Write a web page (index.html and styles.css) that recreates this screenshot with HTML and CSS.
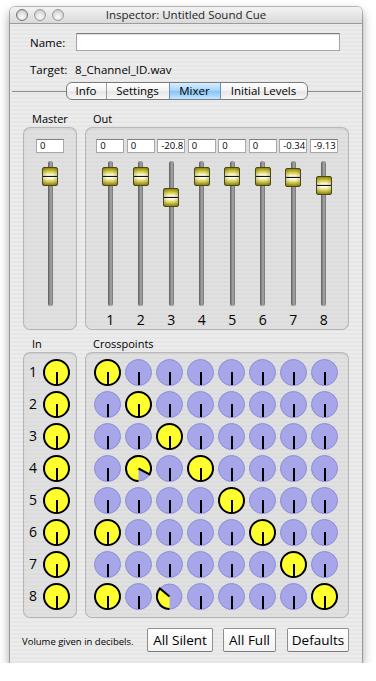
FILE: index.html
```html
<!DOCTYPE html>
<html>
<head>
<meta charset="utf-8">
<title>Inspector: Untitled Sound Cue</title>
<link rel="stylesheet" href="styles.css">
</head>
<body>
<div class="window">
  <div class="titlebar">
    <div class="lights"><span class="light first"></span><span class="light"></span><span class="light"></span></div>
    <div class="title">Inspector: Untitled Sound Cue</div>
    <div></div>
  </div>
  <div class="content">
    <div class="row name-row"><span class="lbl lbl-name">Name:</span><div class="textfield"></div></div>
    <div class="row target-row"><span class="lbl">Target:</span><span>8_Channel_ID.wav</span></div>

    <div class="tabview">
      <div class="tabs">
        <div class="tab t-info">Info</div>
        <div class="tab t-settings">Settings</div>
        <div class="tab t-mixer sel">Mixer</div>
        <div class="tab t-levels">Initial Levels</div>
      </div>

      <div class="section mixer">
        <div class="group left">
          <div class="glabel">Master</div>
          <div class="box mbox">
            <div class="chan">
              <div class="val">0</div>
              <div class="slider"><div class="track"></div><div class="thumb" style="top:6px"></div></div>
            </div>
          </div>
        </div>
        <div class="group right">
          <div class="glabel">Out</div>
          <div class="box obox">
            <div class="chan"><div class="val">0</div><div class="slider"><div class="track"></div><div class="thumb" style="top:6px"></div></div><div class="num">1</div></div>
            <div class="chan"><div class="val">0</div><div class="slider"><div class="track"></div><div class="thumb" style="top:6px"></div></div><div class="num">2</div></div>
            <div class="chan"><div class="val">-20.8</div><div class="slider"><div class="track"></div><div class="thumb" style="top:27px"></div></div><div class="num">3</div></div>
            <div class="chan"><div class="val">0</div><div class="slider"><div class="track"></div><div class="thumb" style="top:6px"></div></div><div class="num">4</div></div>
            <div class="chan"><div class="val">0</div><div class="slider"><div class="track"></div><div class="thumb" style="top:6px"></div></div><div class="num">5</div></div>
            <div class="chan"><div class="val">0</div><div class="slider"><div class="track"></div><div class="thumb" style="top:6px"></div></div><div class="num">6</div></div>
            <div class="chan"><div class="val">-0.34</div><div class="slider"><div class="track"></div><div class="thumb" style="top:7px"></div></div><div class="num">7</div></div>
            <div class="chan"><div class="val">-9.13</div><div class="slider"><div class="track"></div><div class="thumb" style="top:15px"></div></div><div class="num">8</div></div>
          </div>
        </div>
      </div>

      <div class="section cross">
        <div class="group left">
          <div class="glabel">In</div>
          <div class="box ibox">
            <span class="inum">1</span><i class="k y"></i>
            <span class="inum">2</span><i class="k y"></i>
            <span class="inum">3</span><i class="k y"></i>
            <span class="inum">4</span><i class="k y"></i>
            <span class="inum">5</span><i class="k y"></i>
            <span class="inum">6</span><i class="k y"></i>
            <span class="inum">7</span><i class="k y"></i>
            <span class="inum">8</span><i class="k y"></i>
          </div>
        </div>
        <div class="group right">
          <div class="glabel">Crosspoints</div>
          <div class="box xbox">
            <i class="k y"></i><i class="k"></i><i class="k"></i><i class="k"></i><i class="k"></i><i class="k"></i><i class="k"></i><i class="k"></i>
            <i class="k"></i><i class="k y"></i><i class="k"></i><i class="k"></i><i class="k"></i><i class="k"></i><i class="k"></i><i class="k"></i>
            <i class="k"></i><i class="k"></i><i class="k y"></i><i class="k"></i><i class="k"></i><i class="k"></i><i class="k"></i><i class="k"></i>
            <i class="k"></i>
            <svg class="ks" viewBox="0 0 27 27" width="27" height="27"><circle cx="13.5" cy="13.5" r="12.5" fill="#a6a6e8" stroke="#8c8cda"/><path d="M13.5 13.5 L13.5 26 A12.5 12.5 0 1 1 24.54 19.37 Z" fill="#ffff2e"/><path d="M13.5 26 A12.5 12.5 0 1 1 24.54 19.37 L13.5 13.5" fill="none" stroke="#000" stroke-width="2"/></svg>
            <i class="k"></i><i class="k y"></i><i class="k"></i><i class="k"></i><i class="k"></i><i class="k"></i>
            <i class="k"></i><i class="k"></i><i class="k"></i><i class="k"></i><i class="k y"></i><i class="k"></i><i class="k"></i><i class="k"></i>
            <i class="k y"></i><i class="k"></i><i class="k"></i><i class="k"></i><i class="k"></i><i class="k y"></i><i class="k"></i><i class="k"></i>
            <i class="k"></i><i class="k"></i><i class="k"></i><i class="k"></i><i class="k"></i><i class="k"></i><i class="k y"></i><i class="k"></i>
            <i class="k y"></i><i class="k"></i>
            <svg class="ks" viewBox="0 0 27 27" width="27" height="27"><circle cx="13.5" cy="13.5" r="12.5" fill="#a6a6e8" stroke="#8c8cda"/><path d="M13.5 13.5 L13.5 26 A12.5 12.5 0 0 1 3.92 5.47 Z" fill="#ffff2e"/><path d="M13.5 26 A12.5 12.5 0 0 1 3.92 5.47 L13.5 13.5" fill="none" stroke="#000" stroke-width="2"/></svg>
            <i class="k"></i><i class="k"></i><i class="k"></i><i class="k"></i><i class="k y"></i>
          </div>
        </div>
      </div>
    </div>

    <div class="footer">
      <span class="note">Volume given in decibels.</span>
      <div class="btn b-silent">All Silent</div>
      <div class="btn b-full">All Full</div>
      <div class="btn b-def">Defaults</div>
    </div>
  </div>
</div>
</body>
</html>
```

FILE: styles.css
```css
html, body {
  margin: 0;
  padding: 0;
  background: #ffffff;
}

body {
  font-family: "Open Sans", "DejaVu Sans", sans-serif;
  color: #000;
}

.window {
  margin: 7px 0 0 10px;
  width: 352px;
  background: repeating-linear-gradient(to bottom, #ececec 0 2px, #e6e6e6 2px 4px);
  box-shadow: 0 0 0 1px rgba(0, 0, 0, 0.25), 0 5px 11px rgba(0, 0, 0, 0.42);
  border-radius: 5px 5px 0 0;
}

/* ---------- title bar ---------- */
.titlebar {
  height: 16px;
  border-bottom: 1px solid #9b9b9b;
  background: linear-gradient(to bottom, #f3f3f3, #d9d9d9);
  border-radius: 5px 5px 0 0;
  display: grid;
  grid-template-columns: 1fr auto 1fr;
  align-items: center;
}

.lights {
  display: flex;
  gap: 6px;
  padding-left: 6px;
}

.light {
  width: 12px;
  height: 12px;
  box-sizing: border-box;
  border-radius: 50%;
  border: 1px solid #9a9a9a;
  background: radial-gradient(circle at 50% 70%, #fbfbfb 0, #e2e2e2 45%, #bdbdbd 100%);
}

.light.first {
  border-color: #707070;
}

.title {
  font-size: 11.5px;
  line-height: 16px;
  color: #1e1e1e;
  white-space: nowrap;
}

/* ---------- name / target ---------- */
.content {
  padding-bottom: 11px;
}

.row {
  display: flex;
  align-items: center;
  height: 18px;
  margin-top: 9px;
  padding-left: 20px;
  font-size: 11.5px;
}

.lbl {
  width: 45px;
}

.lbl-name {
  width: 46px;
}

.textfield {
  width: 264px;
  height: 18px;
  box-sizing: border-box;
  background: #fff;
  border: 1px solid #a4a4a4;
  border-top-color: #7a7a7a;
  box-shadow: inset 0 1px 1px rgba(0, 0, 0, 0.12);
}

/* ---------- tab view ---------- */
.tabview {
  margin: 13px 1px 0 2px;
  border-top: 1px solid #8c8c8c;
}

.tabs {
  margin: -10px auto 0;
  width: 242px;
  height: 18px;
  box-sizing: border-box;
  display: flex;
  border: 1px solid #7b7b7b;
  border-radius: 6px;
  overflow: hidden;
  background: linear-gradient(to bottom, #ffffff 0%, #f4f4f4 45%, #e6e6e6 55%, #f7f7f7 100%);
  position: relative;
}

.tab {
  font-size: 11.5px;
  line-height: 16px;
  text-align: center;
  box-sizing: border-box;
  border-left: 1px solid #9c9c9c;
}

.t-info { width: 39px; border-left: 0; }
.t-settings { width: 63px; }
.t-mixer { width: 52px; }
.t-levels { width: 86px; }

.tab.sel {
  background: linear-gradient(to bottom, #d8edfe 0%, #acd6fb 45%, #88c4f7 52%, #a9d7fd 80%, #c9e8ff 100%);
  border-left-color: #6d8fb3;
  border-right: 1px solid #6d8fb3;
}

.t-levels { border-left: 0; }

/* ---------- sections / groups ---------- */
.section {
  display: flex;
  gap: 8px;
  padding-left: 11px;
}

.mixer {
  margin-top: 12px;
}

.cross {
  margin-top: 7px;
}

.glabel {
  font-size: 11px;
  line-height: 14px;
  height: 14px;
  margin-bottom: 1px;
  padding-left: 8px;
}

.left .glabel {
  padding-left: 9px;
}

.box {
  box-sizing: border-box;
  border: 1px solid rgba(0, 0, 0, 0.19);
  border-radius: 7px;
  background: rgba(0, 0, 0, 0.045);
  box-shadow: inset 0 1px 2px rgba(0, 0, 0, 0.07);
}

.left .box { width: 54px; }
.right .box { width: 264px; }

.mbox, .obox {
  height: 203px;
  padding-top: 11px;
}

.mbox {
  display: flex;
  justify-content: center;
}

.obox {
  display: grid;
  grid-template-columns: repeat(8, 30.5px);
  padding-left: 9px;
}

.chan {
  display: flex;
  flex-direction: column;
  align-items: center;
}

.val {
  width: 28px;
  height: 14px;
  box-sizing: border-box;
  background: #fff;
  border: 1px solid #a8a8a8;
  border-top-color: #808080;
  font-size: 9.5px;
  line-height: 12px;
  padding-left: 3px;
  white-space: nowrap;
  overflow: hidden;
}

.slider {
  position: relative;
  width: 16px;
  height: 145px;
  margin-top: 8px;
}

.track {
  width: 5px;
  height: 100%;
  margin: 0 auto;
  border-radius: 3px;
  background: linear-gradient(to right, #5a5a5a 0%, #8a8a8a 35%, #a9a9a9 60%, #707070 100%);
}

.thumb {
  position: absolute;
  left: 0;
  width: 16px;
  height: 19px;
  box-sizing: border-box;
  border: 1px solid #4b4716;
  border-radius: 2px;
  background:
    linear-gradient(to right, rgba(60, 55, 0, 0.22), rgba(0, 0, 0, 0) 30%, rgba(0, 0, 0, 0) 70%, rgba(60, 55, 0, 0.22)),
    linear-gradient(to bottom, #8f8818 0%, #cfc53c 18%, #f2eda0 34%, #fffff0 44%, #111 45%, #111 54%, #fffff0 55%, #f5f1b4 66%, #d0c647 82%, #8a8316 100%);
}

.num {
  margin-top: 6px;
  font-size: 14px;
  line-height: 16px;
}

/* ---------- knobs ---------- */
.ibox, .xbox {
  height: 266px;
  padding-top: 3px;
  display: grid;
  grid-auto-rows: 32px;
  align-items: center;
  justify-items: center;
}

.ibox {
  grid-template-columns: 14px 27px;
  column-gap: 3px;
  padding-left: 2px;
}

.xbox {
  grid-template-columns: repeat(8, 31px);
  padding-left: 6px;
}

.inum {
  font-size: 14px;
  line-height: 16px;
}

.k {
  position: relative;
  display: block;
  width: 27px;
  height: 27px;
  box-sizing: border-box;
  border-radius: 50%;
  background: #a6a6e8;
  border: 1px solid #8c8cda;
}

.k.y {
  background: #ffff2e;
  border: 2px solid #000;
}

.k::after {
  content: "";
  position: absolute;
  left: 50%;
  top: 50%;
  bottom: 0;
  width: 2px;
  margin-left: -1px;
  background: #000;
}

.ks {
  display: block;
}

/* ---------- footer ---------- */
.footer {
  display: flex;
  align-items: center;
  margin: 10px 13px 0 12px;
}

.note {
  font-size: 9.5px;
  padding-top: 3px;
}

.btn {
  height: 24px;
  box-sizing: border-box;
  border: 1px solid #8f8f8f;
  border-bottom-color: #7a7a7a;
  border-radius: 2px;
  background: linear-gradient(to bottom, #ffffff, #f2f2f2);
  font-size: 13.5px;
  display: flex;
  align-items: center;
  justify-content: center;
  white-space: nowrap;
}

.b-silent { width: 66px; margin-left: auto; }
.b-full { width: 53px; margin-left: 10px; }
.b-def { width: 62px; margin-left: 11px; }
```
